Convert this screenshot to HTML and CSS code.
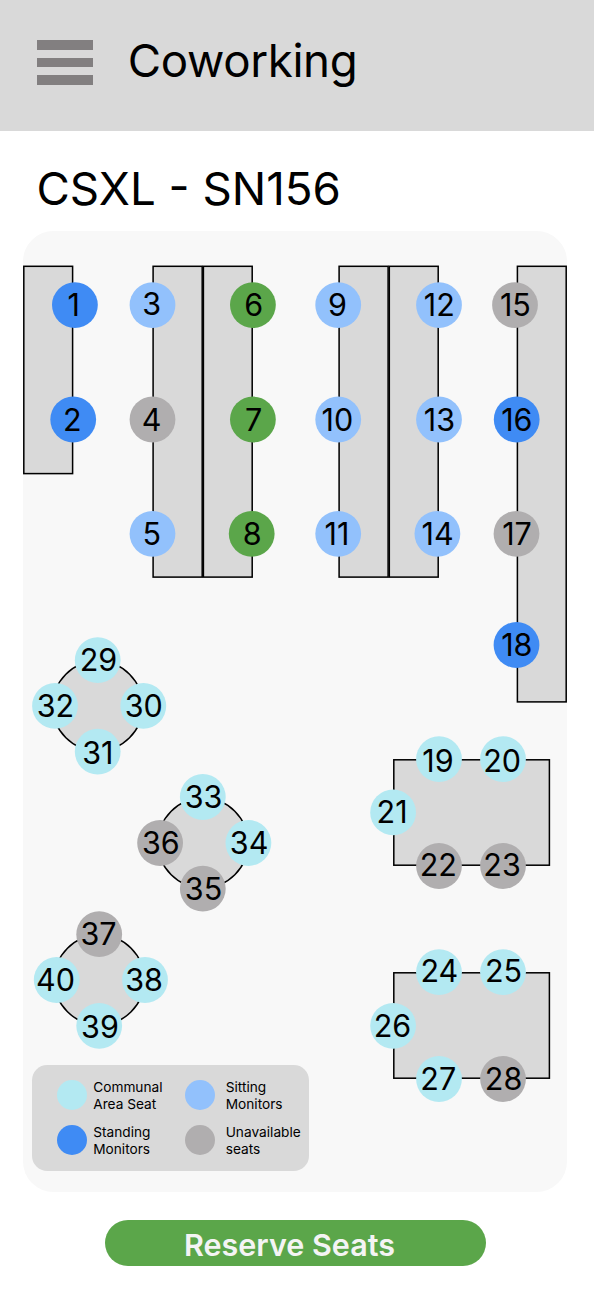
FILE: index.html
```html
<!DOCTYPE html>
<html lang="en">
<head>
<meta charset="utf-8">
<title>Coworking</title>
<link rel="stylesheet" href="styles.css">
</head>
<body>
<header class="topbar">
  <button class="menu" aria-label="Menu"><span class="menu-bar"></span><span class="menu-bar"></span><span class="menu-bar"></span></button>
  <h1 class="title">Coworking</h1>
</header>
<main class="page">
  <h2 class="room">CSXL - SN156</h2>
  <section class="floor">
    <svg class="map" viewBox="23 231 544 961">
      <g class="table">
        <rect x="23.8" y="266.3" width="48.8" height="207.3"/>
        <rect x="153.1" y="266.3" width="49.1" height="310.8"/>
        <rect x="203.4" y="266.3" width="48.8" height="310.8"/>
        <rect x="339.1" y="266.3" width="49" height="310.8"/>
        <rect x="389.3" y="266.3" width="48.9" height="310.8"/>
        <rect x="517.4" y="266.3" width="48.8" height="435.6"/>
        <rect x="393.8" y="759.8" width="155.6" height="105.4"/>
        <rect x="393.8" y="972.8" width="155.6" height="105.4"/>
        <circle cx="97.7" cy="706" r="45"/>
        <circle cx="203" cy="843" r="45"/>
        <circle cx="99.3" cy="980" r="45"/>
      </g>
      <g class="standing">
        <circle cx="74.9" cy="305.1" r="22.9"/><text x="73.8" y="316.3">1</text>
        <circle cx="73.2" cy="419.5" r="22.9"/><text x="72.4" y="430.6">2</text>
        <circle cx="516.7" cy="419.5" r="22.9"/><text x="516.8" y="430.6">16</text>
        <circle cx="516.5" cy="645" r="22.9"/><text x="516.8" y="656.1">18</text>
      </g>
      <g class="sitting">
        <circle cx="152.5" cy="305.1" r="22.9"/><text x="151.7" y="315">3</text>
        <circle cx="152.5" cy="533.8" r="22.9"/><text x="151.7" y="544.9">5</text>
        <circle cx="338.2" cy="305.1" r="22.9"/><text x="337.4" y="316.3">9</text>
        <circle cx="338.2" cy="419.5" r="22.9"/><text x="337.4" y="430.6">10</text>
        <circle cx="338.2" cy="533.8" r="22.9"/><text x="336.9" y="544.9">11</text>
        <circle cx="439" cy="305.1" r="22.9"/><text x="439.3" y="316.3">12</text>
        <circle cx="439" cy="419.5" r="22.9"/><text x="439.4" y="430.6">13</text>
        <circle cx="437.4" cy="533.8" r="22.9"/><text x="437.6" y="544.9">14</text>
      </g>
      <g class="selected">
        <circle cx="252.9" cy="305.1" r="22.9"/><text x="253.7" y="316.3">6</text>
        <circle cx="252.9" cy="419.5" r="22.9"/><text x="253.7" y="430.6">7</text>
        <circle cx="251.7" cy="533.8" r="22.9"/><text x="252.1" y="544.9">8</text>
      </g>
      <g class="communal">
        <circle cx="439" cy="759.1" r="22.9"/><text x="437.9" y="771.6">19</text>
        <circle cx="503" cy="759.1" r="22.9"/><text x="502.1" y="771.6">20</text>
        <circle cx="393.1" cy="812.4" r="22.9"/><text x="392.1" y="823.3">21</text>
        <circle cx="439" cy="972.2" r="22.9"/><text x="439.3" y="982">24</text>
        <circle cx="503" cy="972.2" r="22.9"/><text x="503.6" y="982">25</text>
        <circle cx="393.1" cy="1025.8" r="22.9"/><text x="392.5" y="1037">26</text>
        <circle cx="439" cy="1079" r="22.9"/><text x="438.3" y="1090">27</text>
        <circle cx="97.7" cy="660.2" r="22.9"/><text x="98.4" y="671">29</text>
        <circle cx="143.3" cy="705.9" r="22.9"/><text x="143.8" y="716.9">30</text>
        <circle cx="97.7" cy="751.6" r="22.9"/><text x="97.8" y="764.1">31</text>
        <circle cx="55" cy="705.9" r="22.9"/><text x="55.5" y="716.9">32</text>
        <circle cx="202.8" cy="797" r="22.9"/><text x="203.5" y="808.1">33</text>
        <circle cx="248.4" cy="843" r="22.9"/><text x="249.1" y="854">34</text>
        <circle cx="145" cy="980" r="22.9"/><text x="144.1" y="991">38</text>
        <circle cx="99.2" cy="1025.8" r="22.9"/><text x="100" y="1038.1">39</text>
        <circle cx="56.7" cy="980" r="22.9"/><text x="55.5" y="991">40</text>
      </g>
      <g class="unavailable">
        <circle cx="152.5" cy="419.5" r="22.9"/><text x="151.5" y="430.6">4</text>
        <circle cx="515" cy="305.1" r="22.9"/><text x="515.4" y="316.3">15</text>
        <circle cx="516.5" cy="533.8" r="22.9"/><text x="517" y="544.9">17</text>
        <circle cx="439" cy="866" r="22.9"/><text x="438.3" y="875.6">22</text>
        <circle cx="503" cy="866" r="22.9"/><text x="502.1" y="875.6">23</text>
        <circle cx="503" cy="1079" r="22.9"/><text x="503.6" y="1090">28</text>
        <circle cx="202.8" cy="888.7" r="22.9"/><text x="203.5" y="899.8">35</text>
        <circle cx="160.1" cy="843" r="22.9"/><text x="160.8" y="854">36</text>
        <circle cx="99.2" cy="934.2" r="22.9"/><text x="98.6" y="945.3">37</text>
      </g>
    </svg>
    <ul class="legend">
      <li class="entry"><span class="dot dot-communal"></span><span class="label">Communal<br>Area Seat</span></li>
      <li class="entry entry-wide"><span class="dot dot-sitting"></span><span class="label">Sitting<br>Monitors</span></li>
      <li class="entry"><span class="dot dot-standing"></span><span class="label">Standing<br>Monitors</span></li>
      <li class="entry entry-wide"><span class="dot dot-unavailable"></span><span class="label">Unavailable<br>seats</span></li>
    </ul>
  </section>
  <button class="reserve">Reserve Seats</button>
</main>
</body>
</html>
```
FILE: styles.css
```css
* { box-sizing: border-box; }

body {
  margin: 0;
  min-height: 1290px;
  background: #fff;
  color: #000;
  font-family: Inter, "Liberation Sans", sans-serif;
}

button { border: 0; padding: 0; font: inherit; }

.topbar {
  display: flex;
  align-items: flex-start;
  height: 131px;
  padding: 0 36.5px;
  background: #d9d9d9;
}

.menu {
  display: flex;
  flex-direction: column;
  gap: 8px;
  width: 56.5px;
  margin-top: 40px;
  background: none;
}

.menu-bar { height: 9.5px; background: #827f80; }

.title, .room {
  margin: 0;
  font-size: 45.7px;
  font-weight: 400;
  line-height: 56px;
}

.title { margin: 33px 0 0 34.8px; letter-spacing: -0.38px; }

.page {
  display: flex;
  flex-direction: column;
  padding: 30px 27px 0 23px;
}

.room { padding-left: 13.5px; }

.floor {
  position: relative;
  height: 961px;
  margin-top: 14px;
  border-radius: 30.5px;
  background: #f8f8f8;
}

.map { display: block; width: 544px; height: 961px; }

.map text {
  fill: #000;
  font-size: 30.5px;
  text-anchor: middle;
}

.table { fill: #d9d9d9; stroke: #000; stroke-width: 1.52; }
.standing { fill: #3f8bf4; }
.sitting { fill: #92c1fc; }
.selected { fill: #5ba64a; }
.communal { fill: #b3e9f2; }
.unavailable { fill: #b0aeaf; }

.legend {
  position: absolute;
  left: 9.3px;
  bottom: 21px;
  display: grid;
  grid-template-columns: 128px 1fr;
  align-content: start;
  row-gap: 9px;
  width: 277px;
  height: 106px;
  margin: 0;
  padding: 12px 0 0 24.3px;
  border-radius: 15.2px;
  background: #d9d9d9;
  font-size: 13.7px;
  line-height: 17px;
  list-style: none;
}

.entry { display: flex; align-items: center; gap: 6px; white-space: nowrap; }
.entry-wide { gap: 10.5px; }
.label { padding-top: 2px; }
.dot { flex: none; width: 30.6px; height: 30.6px; border-radius: 50%; }
.dot-communal { background: #b3e9f2; }
.dot-sitting { background: #92c1fc; }
.dot-standing { background: #3f8bf4; }
.dot-unavailable { background: #b0aeaf; }

.reserve {
  width: 381px;
  height: 46px;
  margin: 28.4px 0 0 82px;
  padding: 3px 12px 0 0;
  border-radius: 23px;
  background: #5ba64a;
  color: #f4f4f4;
  font-size: 30.5px;
  font-weight: 600;
  line-height: 43px;
}
```
